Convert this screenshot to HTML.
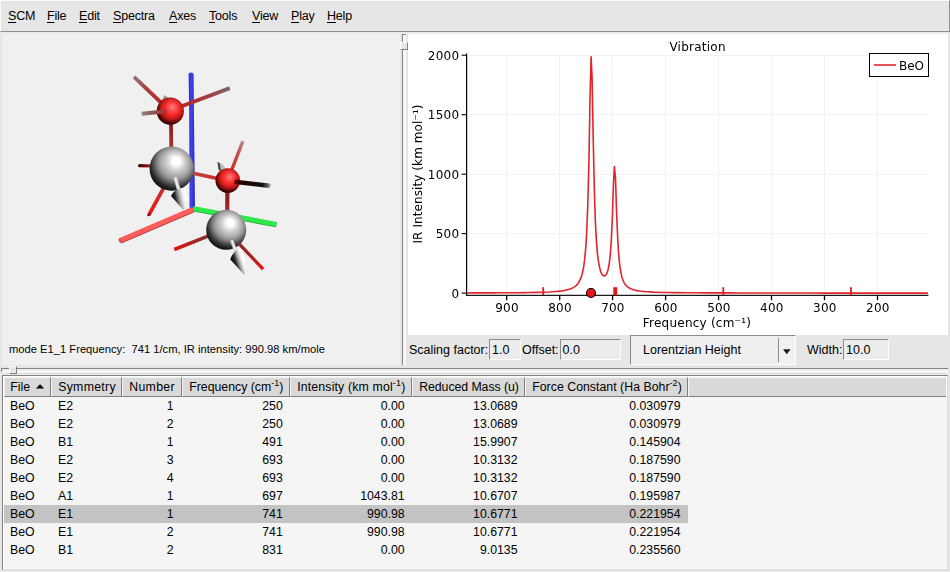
<!DOCTYPE html>
<html><head><meta charset="utf-8"><title>Vibration</title>
<style>
html,body{margin:0;padding:0;}
body{width:950px;height:572px;overflow:hidden;background:#e6e6e6;position:relative;font-family:"Liberation Sans","DejaVu Sans",sans-serif;font-size:12.5px;color:#000;}
.abs{position:absolute;}
#menu{left:0;top:0;width:950px;height:32px;box-sizing:border-box;background:#e6e6e6;border-top:1px solid #fcfcfc;border-left:1px solid #fafafa;border-right:1px solid #8f8f8f;border-bottom:1px solid #8f8f8f;}
#menu span{position:absolute;top:7px;margin-left:-1px;font-size:12.5px;letter-spacing:-0.2px;line-height:16px;white-space:nowrap;}
#menu u{text-decoration:underline;text-underline-offset:2px;}
#mline{display:none;}
#mline2{left:0;top:32px;width:950px;height:2px;background:#eaeaea;}
#view3d{left:2px;top:34px;width:398px;height:331px;background:#f0f0f0;}
#status{left:9px;top:341px;font-size:11.2px;line-height:16px;white-space:pre;}
#vsash_d{left:402px;top:34px;width:1px;height:331px;background:#858585;}
#vsash_w{left:403px;top:35px;width:3px;height:330px;background:#f7f7f7;border-top:1px solid #858585;margin-top:-1px;}
#vhandle{left:400px;top:42px;width:7px;height:7px;background:#e6e6e6;border-top:1px solid #fff;border-left:1px solid #fff;border-right:1px solid #828282;border-bottom:1px solid #828282;box-sizing:border-box;width:8px;height:8px;}
#chart{left:408px;top:34px;width:540px;height:301px;background:#fff;}
.lbl{font-size:12.5px;line-height:16px;white-space:nowrap;}
.entry{box-sizing:border-box;height:21px;background:#ececec;border-top:1px solid #8c8c8c;border-left:1px solid #8c8c8c;border-right:1px solid #fff;border-bottom:1px solid #fff;font-size:12.5px;line-height:20px;padding-left:2px;white-space:nowrap;}
#combo{left:630px;top:335px;width:166px;height:30px;box-sizing:border-box;background:#eeeeee;border-top:1px solid #8c8c8c;border-left:1px solid #8c8c8c;border-right:1px solid #fff;border-bottom:1px solid #fff;}
#hsash_d{left:1px;top:368px;width:947px;height:1px;background:#858585;}
#hsash_l{left:1px;top:368px;width:1px;height:4px;background:#858585;}
#hsash_w{left:2px;top:369px;width:946px;height:2px;background:#ececec;border-bottom:1px solid #fff;box-shadow:0 1px 0 #ebebeb;}
#hhandle{left:9px;top:366px;width:8px;height:8px;background:#e6e6e6;border-top:1px solid #fff;border-left:1px solid #fff;border-right:1px solid #828282;border-bottom:1px solid #828282;box-sizing:border-box;}
#tframe{left:2px;top:375px;width:946px;height:195px;box-sizing:border-box;border-top:1px solid #828282;border-left:1px solid #828282;border-right:1px solid #dadada;border-bottom:1px solid #dadada;background:#f5f5f5;}
#tinner{left:3px;top:376px;width:944px;height:193px;box-sizing:border-box;border:1px solid #fcfcfc;}
.hc{position:absolute;top:377px;height:20px;box-sizing:border-box;background:#d9d9d9;border-top:1px solid #f4f4f4;border-left:1px solid #f4f4f4;border-right:1px solid #7f7f7f;border-bottom:1px solid #7f7f7f;font-size:12.3px;line-height:18px;white-space:nowrap;padding-left:5px;}
.hc sup{font-size:9px;line-height:0;vertical-align:baseline;position:relative;top:-5px;}
.row{position:absolute;left:4px;width:684px;height:18px;}
.row.sel{background:#c3c3c3;}
.c{position:absolute;top:0;height:18px;line-height:18px;font-size:12.3px;white-space:nowrap;}
.r{text-align:right;}
</style></head><body>
<div id="menu" class="abs"><span style="left:8px"><u>S</u>CM</span><span style="left:47px"><u>F</u>ile</span><span style="left:79px"><u>E</u>dit</span><span style="left:113px"><u>S</u>pectra</span><span style="left:169px"><u>A</u>xes</span><span style="left:209px"><u>T</u>ools</span><span style="left:252px"><u>V</u>iew</span><span style="left:291px"><u>P</u>lay</span><span style="left:327px"><u>H</u>elp</span></div><div id="mline" class="abs"></div><div id="mline2" class="abs"></div>
<div id="view3d" class="abs"><svg width="398" height="331" viewBox="2 34 398 331" style="position:absolute;left:0;top:0">
<defs>
<radialGradient id="gG" cx="0.6" cy="0.33" r="0.72"><stop offset="0" stop-color="#fff"/><stop offset="0.12" stop-color="#fff"/><stop offset="0.2" stop-color="#e8e8e8"/><stop offset="0.33" stop-color="#c8c8c8"/><stop offset="0.45" stop-color="#b0b0b0"/><stop offset="0.54" stop-color="#9c9c9c"/><stop offset="0.6" stop-color="#888"/><stop offset="0.675" stop-color="#6a6a6a"/><stop offset="0.76" stop-color="#484848"/><stop offset="0.84" stop-color="#2c2c2c"/><stop offset="0.92" stop-color="#1c1c1c"/><stop offset="1" stop-color="#101010"/></radialGradient>
<radialGradient id="gR" cx="0.58" cy="0.36" r="0.72"><stop offset="0" stop-color="#ff7a7a"/><stop offset="0.12" stop-color="#ff6060"/><stop offset="0.25" stop-color="#fc4040"/><stop offset="0.38" stop-color="#f22a2a"/><stop offset="0.5" stop-color="#de2020"/><stop offset="0.6" stop-color="#c01818"/><stop offset="0.68" stop-color="#9c1010"/><stop offset="0.76" stop-color="#700a0a"/><stop offset="0.84" stop-color="#480404"/><stop offset="0.92" stop-color="#280000"/><stop offset="1" stop-color="#140000"/></radialGradient><radialGradient id="gL" cx="0.5" cy="0.5" r="0.5"><stop offset="0.6" stop-color="#000" stop-opacity="0"/><stop offset="0.85" stop-color="#000" stop-opacity="0.07"/><stop offset="1" stop-color="#000" stop-opacity="0.2"/></radialGradient>
<linearGradient id="b1" gradientUnits="userSpaceOnUse" x1="160" y1="102" x2="134" y2="77"><stop offset="0" stop-color="#b82a2a"/><stop offset="0.6" stop-color="#a84444"/><stop offset="1" stop-color="#8a7878"/></linearGradient>
<linearGradient id="b2" gradientUnits="userSpaceOnUse" x1="182" y1="106" x2="230" y2="88"><stop offset="0" stop-color="#b82828"/><stop offset="0.6" stop-color="#a04040"/><stop offset="1" stop-color="#7a6a6a"/></linearGradient>
<linearGradient id="b3" gradientUnits="userSpaceOnUse" x1="166" y1="111" x2="142" y2="114"><stop offset="0" stop-color="#a83030"/><stop offset="0.5" stop-color="#905050"/><stop offset="1" stop-color="#868686"/></linearGradient>
<linearGradient id="b4" gradientUnits="userSpaceOnUse" x1="171" y1="124" x2="171" y2="148"><stop offset="0" stop-color="#8a2020"/><stop offset="1" stop-color="#a83030"/></linearGradient>
<linearGradient id="b5" gradientUnits="userSpaceOnUse" x1="150" y1="166" x2="138" y2="165.5"><stop offset="0" stop-color="#a01818"/><stop offset="1" stop-color="#3a0000"/></linearGradient>
<linearGradient id="b6" gradientUnits="userSpaceOnUse" x1="163" y1="188" x2="149" y2="215"><stop offset="0" stop-color="#c83030"/><stop offset="1" stop-color="#f01818"/></linearGradient>
<linearGradient id="b7" gradientUnits="userSpaceOnUse" x1="193" y1="173" x2="217" y2="178"><stop offset="0" stop-color="#c04040"/><stop offset="1" stop-color="#d03030"/></linearGradient>
<linearGradient id="b8" gradientUnits="userSpaceOnUse" x1="232" y1="169" x2="243" y2="141"><stop offset="0" stop-color="#d02828"/><stop offset="0.6" stop-color="#c85050"/><stop offset="1" stop-color="#b09090"/></linearGradient>
<linearGradient id="b9" gradientUnits="userSpaceOnUse" x1="234" y1="181.5" x2="270" y2="185.8"><stop offset="0" stop-color="#5a0808"/><stop offset="0.3" stop-color="#200404"/><stop offset="0.8" stop-color="#181010"/><stop offset="1" stop-color="#808080"/></linearGradient>
<linearGradient id="b10" gradientUnits="userSpaceOnUse" x1="227" y1="192" x2="227" y2="213"><stop offset="0" stop-color="#8a1818"/><stop offset="1" stop-color="#a83030"/></linearGradient>
<linearGradient id="b11" gradientUnits="userSpaceOnUse" x1="207" y1="237" x2="174" y2="249.5"><stop offset="0" stop-color="#8a3030"/><stop offset="0.5" stop-color="#b02424"/><stop offset="1" stop-color="#e81414"/></linearGradient>
<linearGradient id="b12" gradientUnits="userSpaceOnUse" x1="239" y1="244" x2="263" y2="269"><stop offset="0" stop-color="#8a2828"/><stop offset="0.6" stop-color="#b02020"/><stop offset="1" stop-color="#f01010"/></linearGradient>
<linearGradient id="c1" gradientUnits="userSpaceOnUse" x1="171" y1="197" x2="189.5" y2="193"><stop offset="0" stop-color="#000"/><stop offset="0.22" stop-color="#2a2a2a"/><stop offset="0.42" stop-color="#a0a0a0"/><stop offset="0.62" stop-color="#f0f0f0"/><stop offset="0.82" stop-color="#ffffff"/><stop offset="1" stop-color="#d0d0d0"/></linearGradient>
<linearGradient id="c2" gradientUnits="userSpaceOnUse" x1="231" y1="259.5" x2="245.5" y2="254.8"><stop offset="0" stop-color="#000"/><stop offset="0.25" stop-color="#2a2a2a"/><stop offset="0.45" stop-color="#a0a0a0"/><stop offset="0.65" stop-color="#f0f0f0"/><stop offset="0.85" stop-color="#ffffff"/><stop offset="1" stop-color="#d8d8d8"/></linearGradient>
<linearGradient id="s1" gradientUnits="userSpaceOnUse" x1="173.5" y1="184" x2="179.5" y2="182.5"><stop offset="0" stop-color="#808080"/><stop offset="0.5" stop-color="#f4f4f4"/><stop offset="1" stop-color="#b0b0b0"/></linearGradient>
<linearGradient id="s2" gradientUnits="userSpaceOnUse" x1="230.5" y1="246" x2="236.5" y2="244"><stop offset="0" stop-color="#808080"/><stop offset="0.5" stop-color="#f4f4f4"/><stop offset="1" stop-color="#b0b0b0"/></linearGradient>
<linearGradient id="ax" gradientUnits="userSpaceOnUse" x1="188.8" y1="0" x2="195" y2="0"><stop offset="0" stop-color="#2a2ab4"/><stop offset="0.35" stop-color="#4242f2"/><stop offset="0.7" stop-color="#3636de"/><stop offset="1" stop-color="#2222aa"/></linearGradient>
</defs>
<path d="M188.6,73.8 Q191,71.2 193.6,73.8 L193.9,110 L195,208.5 L189.6,208.5 L189.2,110 Z" fill="url(#ax)"/>
<line x1="192.9" y1="208.9" x2="276.4" y2="224.9" stroke="#22a838" stroke-width="5" stroke-linecap="butt"/>
<line x1="193" y1="208.3" x2="276.5" y2="224.3" stroke="#30e84c" stroke-width="4.6" stroke-linecap="butt"/>
<line x1="193.3" y1="209.9" x2="120.3" y2="241.2" stroke="#b43a3a" stroke-width="5.2" stroke-linecap="butt"/>
<line x1="193" y1="209.2" x2="120" y2="240.5" stroke="#ff5c5c" stroke-width="4.8" stroke-linecap="butt"/>
<ellipse cx="120" cy="240.5" rx="1.3" ry="2.3" transform="rotate(-23 120 240.5)" fill="#d84848"/>
<line x1="171" y1="120" x2="171.3" y2="150" stroke="url(#b4)" stroke-width="3.8" stroke-linecap="butt"/>
<line x1="162" y1="103.5" x2="134" y2="76.9" stroke="url(#b1)" stroke-width="3.8" stroke-linecap="butt"/>
<line x1="181" y1="106.5" x2="229.8" y2="88.1" stroke="url(#b2)" stroke-width="3.8" stroke-linecap="butt"/>
<path d="M161.8,100.8 L164.4,95 L169.4,98.4 L167,103.5 Z" fill="#9a9a9a"/>
<circle cx="170.3" cy="111.2" r="13.6" fill="url(#gR)"/>
<circle cx="170.3" cy="111.2" r="13.6" fill="url(#gL)"/>
<line x1="166.5" y1="111.3" x2="141.7" y2="113.7" stroke="url(#b3)" stroke-width="4" stroke-linecap="butt"/>
<line x1="152" y1="166" x2="139.6" y2="165.7" stroke="url(#b5)" stroke-width="3.2" stroke-linecap="round"/>
<line x1="165.6" y1="184.3" x2="148.9" y2="214.9" stroke="url(#b6)" stroke-width="3.8" stroke-linecap="butt"/>
<ellipse cx="148.9" cy="214.9" rx="1.9" ry="1.1" transform="rotate(-28 148.9 214.9)" fill="#5a0000"/>
<line x1="192" y1="173" x2="217.5" y2="178.5" stroke="url(#b7)" stroke-width="3.6" stroke-linecap="butt"/>
<circle cx="171.7" cy="168.7" r="22.1" fill="url(#gG)"/>
<circle cx="171.7" cy="168.7" r="22.1" fill="url(#gL)"/>
<line x1="231.7" y1="170" x2="242.9" y2="141.2" stroke="url(#b8)" stroke-width="3.4" stroke-linecap="butt"/>
<line x1="227.4" y1="190" x2="227.2" y2="215" stroke="url(#b10)" stroke-width="4.2" stroke-linecap="butt"/>
<path d="M217.4,162 L221.8,163.6 Q225,166.5 225.4,170 L222.5,172 L218.6,169.8 Z" fill="#bdbdbd"/><path d="M217.4,162 L219.6,162.9 L221.2,171 L218.6,169.8 Z" fill="#484848"/>
<circle cx="227.8" cy="180.5" r="12.3" fill="url(#gR)"/>
<circle cx="227.8" cy="180.5" r="12.3" fill="url(#gL)"/>
<line x1="234.5" y1="181.7" x2="269.3" y2="185.7" stroke="url(#b9)" stroke-width="4.4" stroke-linecap="butt"/>
<ellipse cx="269.4" cy="185.7" rx="1.2" ry="2" transform="rotate(8 269.4 185.7)" fill="#909090"/>
<path d="M173.3,177.8 L176.9,176.9 L181.2,190.5 L177.4,191.6 Z" fill="url(#s1)"/>
<path d="M171.1,195.9 Q173,191.4 178.8,188.6 Q182.6,187 185.8,189.3 Q188.6,191.8 188.9,195 L184.4,211.2 Z" fill="url(#c1)"/>
<line x1="208" y1="236.2" x2="174.3" y2="249.5" stroke="url(#b11)" stroke-width="3.6" stroke-linecap="butt"/>
<circle cx="226.2" cy="229.8" r="20" fill="url(#gG)"/>
<circle cx="226.2" cy="229.8" r="20" fill="url(#gL)"/>
<line x1="238.7" y1="243.3" x2="263.1" y2="269.2" stroke="url(#b12)" stroke-width="3.3" stroke-linecap="butt"/>
<path d="M229.7,240.8 L233,239.8 L238.2,252.6 L235,253.8 Z" fill="url(#s2)"/>
<path d="M230.3,259.6 Q231.5,254.5 236.8,249.8 Q240.5,248.2 243.3,250.8 Q245.6,253.4 245.7,256.2 L244.8,275.6 Z" fill="url(#c2)"/>
</svg></div>
<div id="status" class="abs">mode E1_1 Frequency:  741 1/cm, IR intensity: 990.98 km/mole</div>
<div id="vsash_d" class="abs"></div><div id="vsash_w" class="abs"></div><div id="vhandle" class="abs"></div>
<div id="chart" class="abs"><svg width="540" height="301" viewBox="408 34 540 301" style="position:absolute;left:0;top:0;will-change:transform;font-family:'DejaVu Sans','Liberation Sans',sans-serif;font-size:12px">
<line x1="466.6" y1="55.5" x2="928.2" y2="55.5" stroke="#f2f2f2"/>
<line x1="466.6" y1="114.5" x2="928.2" y2="114.5" stroke="#f2f2f2"/>
<line x1="466.6" y1="174.5" x2="928.2" y2="174.5" stroke="#f2f2f2"/>
<line x1="466.6" y1="233.5" x2="928.2" y2="233.5" stroke="#f2f2f2"/>
<line x1="506.5" y1="55" x2="506.5" y2="294" stroke="#f2f2f2"/>
<line x1="559.5" y1="55" x2="559.5" y2="294" stroke="#f2f2f2"/>
<line x1="612.5" y1="55" x2="612.5" y2="294" stroke="#f2f2f2"/>
<line x1="665.5" y1="55" x2="665.5" y2="294" stroke="#f2f2f2"/>
<line x1="718.5" y1="55" x2="718.5" y2="294" stroke="#f2f2f2"/>
<line x1="771.5" y1="55" x2="771.5" y2="294" stroke="#f2f2f2"/>
<line x1="824.5" y1="55" x2="824.5" y2="294" stroke="#f2f2f2"/>
<line x1="877.5" y1="55" x2="877.5" y2="294" stroke="#f2f2f2"/>
<line x1="466.6" y1="53.5" x2="466.6" y2="295.9" stroke="#000" stroke-width="1.2"/>
<line x1="466" y1="295.4" x2="928.4" y2="295.4" stroke="#1a1a1a" stroke-width="1.1"/>
<line x1="461.6" y1="55.2" x2="466" y2="55.2" stroke="#000" stroke-width="1.1"/>
<text x="459.3" y="59.7" text-anchor="end" letter-spacing="0.25">2000</text>
<line x1="461.6" y1="114.7" x2="466" y2="114.7" stroke="#000" stroke-width="1.1"/>
<text x="459.3" y="119.2" text-anchor="end" letter-spacing="0.25">1500</text>
<line x1="461.6" y1="174.2" x2="466" y2="174.2" stroke="#000" stroke-width="1.1"/>
<text x="459.3" y="178.7" text-anchor="end" letter-spacing="0.25">1000</text>
<line x1="461.6" y1="233.6" x2="466" y2="233.6" stroke="#000" stroke-width="1.1"/>
<text x="459.3" y="238.1" text-anchor="end" letter-spacing="0.25">500</text>
<line x1="461.6" y1="293.1" x2="466" y2="293.1" stroke="#000" stroke-width="1.1"/>
<text x="459.3" y="297.6" text-anchor="end" letter-spacing="0.25">0</text>
<line x1="506.7" y1="295.4" x2="506.7" y2="300.2" stroke="#000" stroke-width="1.3"/>
<text x="507.0" y="311.6" text-anchor="middle" letter-spacing="0.15">900</text>
<line x1="559.7" y1="295.4" x2="559.7" y2="300.2" stroke="#000" stroke-width="1.3"/>
<text x="560.0" y="311.6" text-anchor="middle" letter-spacing="0.15">800</text>
<line x1="612.6" y1="295.4" x2="612.6" y2="300.2" stroke="#000" stroke-width="1.3"/>
<text x="612.9" y="311.6" text-anchor="middle" letter-spacing="0.15">700</text>
<line x1="665.6" y1="295.4" x2="665.6" y2="300.2" stroke="#000" stroke-width="1.3"/>
<text x="665.9" y="311.6" text-anchor="middle" letter-spacing="0.15">600</text>
<line x1="718.6" y1="295.4" x2="718.6" y2="300.2" stroke="#000" stroke-width="1.3"/>
<text x="718.9" y="311.6" text-anchor="middle" letter-spacing="0.15">500</text>
<line x1="771.5" y1="295.4" x2="771.5" y2="300.2" stroke="#000" stroke-width="1.3"/>
<text x="771.8" y="311.6" text-anchor="middle" letter-spacing="0.15">400</text>
<line x1="824.5" y1="295.4" x2="824.5" y2="300.2" stroke="#000" stroke-width="1.3"/>
<text x="824.8" y="311.6" text-anchor="middle" letter-spacing="0.15">300</text>
<line x1="877.5" y1="295.4" x2="877.5" y2="300.2" stroke="#000" stroke-width="1.3"/>
<text x="877.8" y="311.6" text-anchor="middle" letter-spacing="0.15">200</text>
<text x="697.6" y="51" text-anchor="middle" letter-spacing="0.25">Vibration</text>
<text x="697" y="326.5" text-anchor="middle" letter-spacing="0.23">Frequency (cm⁻¹)</text>
<text transform="translate(421.5,174) rotate(-90)" text-anchor="middle" letter-spacing="0.09">IR Intensity (km mol⁻¹)</text>
<line x1="543.2" y1="287.2" x2="543.2" y2="295.2" stroke="#e8141c" stroke-width="1.8"/>
<line x1="723.3" y1="287.2" x2="723.3" y2="295.2" stroke="#e8141c" stroke-width="1.8"/>
<line x1="851.0" y1="287.2" x2="851.0" y2="295.2" stroke="#e8141c" stroke-width="1.8"/>
<rect x="613.3" y="287.2" width="3.9" height="8" fill="#e8141c"/>
<path d="M466.8,293.0 L473.1,292.9 L479.5,292.9 L485.9,292.9 L492.2,292.9 L498.6,292.8 L504.9,292.8 L511.3,292.8 L517.6,292.7 L524.0,292.6 L530.4,292.5 L536.7,292.4 L543.1,292.2 L549.4,292.0 L555.8,291.5 L560.0,291.1 L562.1,290.9 L564.3,290.5 L566.4,290.1 L568.5,289.5 L570.6,288.8 L572.7,287.9 L574.9,286.6 L575.2,286.3 L576.3,285.4 L577.3,284.3 L578.4,282.9 L579.4,281.2 L580.5,278.9 L581.6,276.0 L582.6,272.1 L583.7,266.7 L584.7,258.9 L585.8,247.4 L586.8,229.8 L587.9,201.7 L589.0,157.6 L590.0,98.6 L591.1,56.9 L592.1,78.8 L593.2,137.4 L594.3,187.5 L595.3,220.2 L596.4,240.6 L597.4,253.5 L598.5,261.9 L599.6,267.5 L600.6,271.3 L601.7,273.7 L602.7,275.2 L603.8,275.9 L604.9,275.9 L605.9,275.0 L607.0,273.1 L608.0,269.9 L609.1,264.5 L610.2,255.8 L611.2,241.5 L612.3,218.7 L613.3,188.1 L614.4,166.5 L615.5,178.3 L616.5,209.5 L617.6,236.2 L618.6,253.7 L619.7,264.8 L620.8,271.9 L621.8,276.7 L622.9,280.0 L623.9,282.3 L625.0,284.1 L626.0,285.5 L627.1,286.5 L628.2,287.3 L628.9,287.8 L631.5,289.1 L634.2,290.0 L636.8,290.6 L639.5,291.0 L642.1,291.3 L644.8,291.6 L647.4,291.8 L650.1,291.9 L652.7,292.1 L655.4,292.2 L666.0,292.5 L676.6,292.6 L687.1,292.8 L697.7,292.8 L708.3,292.9 L718.9,292.9 L729.5,292.9 L740.1,293.0 L750.7,293.0 L761.3,293.0 L771.9,293.0 L782.5,293.0 L793.1,293.0 L803.7,293.0 L814.3,293.0 L824.9,293.1 L835.5,293.1 L846.1,293.1 L856.7,293.1 L867.2,293.1 L877.8,293.1 L888.4,293.1 L899.0,293.1 L909.6,293.1 L920.2,293.1 L927.9,293.1" fill="none" stroke="#e2242c" stroke-width="1.6" stroke-linejoin="round"/>
<circle cx="591.0" cy="293" r="4.5" fill="#e8141c" stroke="#000" stroke-width="1.1"/>
<rect x="869.5" y="53.5" width="59" height="23" fill="#fff" stroke="#000" stroke-width="1"/>
<line x1="874" y1="65" x2="896" y2="65" stroke="#e2343a" stroke-width="1.7"/>
<text x="899" y="69.5">BeO</text>
</svg></div>
<div class="abs lbl" style="left:409px;top:341.8px">Scaling factor:</div><div class="abs entry" style="left:489px;top:339px;width:32px">1.0</div><div class="abs lbl" style="left:522px;top:341.8px">Offset:</div><div class="abs entry" style="left:560px;top:339px;width:61px;padding-left:1.5px">0.0</div><div id="combo" class="abs"><div class="abs lbl" style="left:12px;top:5.8px">Lorentzian Height</div><div class="abs" style="left:147px;top:2px;width:1px;height:24px;background:#8a8a8a"></div><div class="abs" style="left:148px;top:2px;width:16px;height:24px;background:#f1f1f1"></div><svg class="abs" style="left:151px;top:13px" width="10" height="6"><path d="M1,0.2 L8.6,0.2 L4.8,5.2Z" fill="#1a1a1a"/></svg></div><div class="abs lbl" style="left:807px;top:341.8px">Width:</div><div class="abs entry" style="left:843px;top:339px;width:46px">10.0</div>
<div id="hsash_d" class="abs"></div><div id="hsash_l" class="abs"></div><div id="hsash_w" class="abs"></div><div id="hhandle" class="abs"></div>
<div id="tframe" class="abs"></div><div id="tinner" class="abs"></div>
<div class="hc" style="left:4px;width:47px;letter-spacing:0px;padding-left:5.3px">File<svg style="position:absolute;left:30px;top:6px" width="10" height="6"><path d="M0.9,4.5 L9.2,4.5 L5.05,0.2Z" fill="#000"/></svg></div><div class="hc" style="left:51px;width:71px;letter-spacing:0.29px;padding-left:6.2px">Symmetry</div><div class="hc" style="left:122px;width:60px;letter-spacing:0.33px;padding-left:6.2px">Number</div><div class="hc" style="left:182px;width:108px;letter-spacing:0px;padding-left:6.2px">Frequency (cm<sup>-1</sup>)</div><div class="hc" style="left:290px;width:122px;letter-spacing:0.16px;padding-left:6.2px">Intensity (km mol<sup>-1</sup>)</div><div class="hc" style="left:412px;width:113px;letter-spacing:-0.05px;padding-left:6.2px">Reduced Mass (u)</div><div class="hc" style="left:525px;width:163px;letter-spacing:0.03px;padding-left:6.2px">Force Constant (Ha Bohr<sup>-2</sup>)</div><div class="hc" style="left:688px;width:258px;border-right:none"></div>
<div class="row" style="top:397px"><span class="c" style="left:6px">BeO</span><span class="c" style="left:54px">E2</span><span class="c r" style="right:514.5px">1</span><span class="c r" style="right:405.2px">250</span><span class="c r" style="right:283.4px">0.00</span><span class="c r" style="right:170.5px">13.0689</span><span class="c r" style="right:7.5px">0.030979</span></div>
<div class="row" style="top:415px"><span class="c" style="left:6px">BeO</span><span class="c" style="left:54px">E2</span><span class="c r" style="right:514.5px">2</span><span class="c r" style="right:405.2px">250</span><span class="c r" style="right:283.4px">0.00</span><span class="c r" style="right:170.5px">13.0689</span><span class="c r" style="right:7.5px">0.030979</span></div>
<div class="row" style="top:433px"><span class="c" style="left:6px">BeO</span><span class="c" style="left:54px">B1</span><span class="c r" style="right:514.5px">1</span><span class="c r" style="right:405.2px">491</span><span class="c r" style="right:283.4px">0.00</span><span class="c r" style="right:170.5px">15.9907</span><span class="c r" style="right:7.5px">0.145904</span></div>
<div class="row" style="top:451px"><span class="c" style="left:6px">BeO</span><span class="c" style="left:54px">E2</span><span class="c r" style="right:514.5px">3</span><span class="c r" style="right:405.2px">693</span><span class="c r" style="right:283.4px">0.00</span><span class="c r" style="right:170.5px">10.3132</span><span class="c r" style="right:7.5px">0.187590</span></div>
<div class="row" style="top:469px"><span class="c" style="left:6px">BeO</span><span class="c" style="left:54px">E2</span><span class="c r" style="right:514.5px">4</span><span class="c r" style="right:405.2px">693</span><span class="c r" style="right:283.4px">0.00</span><span class="c r" style="right:170.5px">10.3132</span><span class="c r" style="right:7.5px">0.187590</span></div>
<div class="row" style="top:487px"><span class="c" style="left:6px">BeO</span><span class="c" style="left:54px">A1</span><span class="c r" style="right:514.5px">1</span><span class="c r" style="right:405.2px">697</span><span class="c r" style="right:283.4px">1043.81</span><span class="c r" style="right:170.5px">10.6707</span><span class="c r" style="right:7.5px">0.195987</span></div>
<div class="row sel" style="top:505px"><span class="c" style="left:6px">BeO</span><span class="c" style="left:54px">E1</span><span class="c r" style="right:514.5px">1</span><span class="c r" style="right:405.2px">741</span><span class="c r" style="right:283.4px">990.98</span><span class="c r" style="right:170.5px">10.6771</span><span class="c r" style="right:7.5px">0.221954</span></div>
<div class="row" style="top:523px"><span class="c" style="left:6px">BeO</span><span class="c" style="left:54px">E1</span><span class="c r" style="right:514.5px">2</span><span class="c r" style="right:405.2px">741</span><span class="c r" style="right:283.4px">990.98</span><span class="c r" style="right:170.5px">10.6771</span><span class="c r" style="right:7.5px">0.221954</span></div>
<div class="row" style="top:541px"><span class="c" style="left:6px">BeO</span><span class="c" style="left:54px">B1</span><span class="c r" style="right:514.5px">2</span><span class="c r" style="right:405.2px">831</span><span class="c r" style="right:283.4px">0.00</span><span class="c r" style="right:170.5px">9.0135</span><span class="c r" style="right:7.5px">0.235560</span></div>
</body></html>
